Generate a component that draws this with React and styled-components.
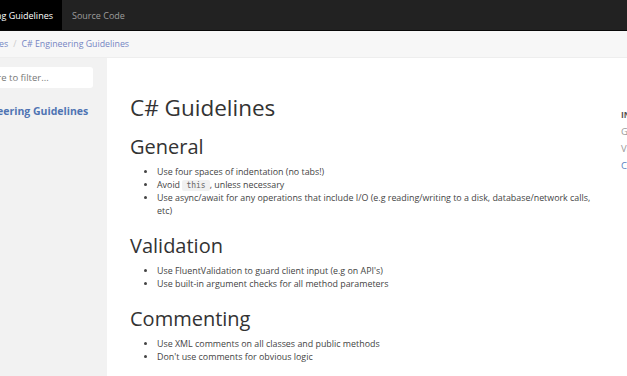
import React from "react";
import styled, { createGlobalStyle } from "styled-components";

const Global = createGlobalStyle`
  html, body { margin: 0; padding: 0; background: #fff; overflow: hidden; }
  body { font-family: "Open Sans", "Noto Sans", sans-serif; color: #333; }
  * { box-sizing: border-box; }
`;

const Page = styled.div`
  width: 627px;
  height: 376px;
  display: flex;
  flex-direction: column;
  overflow: hidden;
`;

const Navbar = styled.nav`
  height: 31px;
  flex: none;
  display: flex;
  align-items: stretch;
  background: #222;
  border-bottom: 1px solid #080808;
  font-size: 9px;
`;

const NavItem = styled.a`
  display: flex;
  align-items: center;
  justify-content: ${(p) => (p.$active ? "flex-end" : "flex-start")};
  white-space: nowrap;
  overflow: hidden;
  padding: 0 10px;
  color: ${(p) => (p.$active ? "#fff" : "#9d9d9d")};
  background: ${(p) => (p.$active ? "#000" : "transparent")};
  width: ${(p) => (p.$active ? "62px" : "auto")};
  padding-right: ${(p) => (p.$active ? "9px" : "10px")};
  text-decoration: none;
`;

const Subnav = styled.div`
  height: 27px;
  flex: none;
  display: flex;
  align-items: center;
  background: #f7f7f7;
  border-bottom: 1px solid #eee;
  font-size: 8.8px;
  white-space: nowrap;
  overflow: hidden;
`;

const Crumbs = styled.ol`
  list-style: none;
  margin: 0 0 0 -86px;
  padding: 0;
  display: flex;
  gap: 5px;
`;

const Crumb = styled.li`
  color: #7585c3;
  display: flex;
  gap: 5px;
  &:not(:first-child)::before {
    content: "/";
    color: #ccc;
  }
`;

const Body = styled.div`
  flex: 1;
  display: flex;
  min-height: 0;
`;

const Sidebar = styled.aside`
  width: 107px;
  flex: none;
  background: #f2f2f2;
  overflow: hidden;
`;

const SidebarInner = styled.div`
  width: 200px;
  margin-left: -93px;
  padding: 9px 14px 0 12px;
  display: flex;
  flex-direction: column;
  gap: 16px;
`;

const Filter = styled.div`
  height: 21px;
  background: #fff;
  border-radius: 3px;
  display: flex;
  align-items: center;
  padding-left: 41px;
  font-size: 9.5px;
  color: #777;
  white-space: nowrap;
`;

const TocLink = styled.a`
  font-size: 10.5px;
  font-weight: 700;
  color: #4f74b3;
  white-space: nowrap;
  text-decoration: none;
  padding-left: 33px;
`;

const Main = styled.main`
  flex: 1;
  display: flex;
  background: #fff;
  min-width: 0;
`;

const Article = styled.article`
  width: 492px;
  flex: none;
  padding: 35px 0 0 23px;
  color: #333;
`;

const H1 = styled.h1`
  font-size: 22.5px;
  font-weight: 400;
  margin: 0 0 11px;
  line-height: 30px;
`;

const H2 = styled.h2`
  font-size: 20px;
  font-weight: 400;
  margin: 0 0 6px;
  line-height: 26px;
`;

const List = styled.ul`
  margin: 0 0 16px;
  padding-left: 27px;
  font-size: 8.9px;
  line-height: 12.5px;
  color: #444;
  & li::marker { font-size: 8px; }
`;

const Code = styled.code`
  font-family: "DejaVu Sans Mono", "Liberation Mono", monospace;
  font-size: 8px;
  background: #f1f1f1;
  color: #666;
  padding: 1px 4px;
  border-radius: 2px;
`;

const Affix = styled.div`
  padding: 50px 0 0 22px;
  display: flex;
  flex-direction: column;
  gap: 4px;
  font-size: 9.5px;
  line-height: 13px;
  white-space: nowrap;
`;

const AffixTitle = styled.div`
  font-weight: 700;
  color: #555;
  font-size: 8.5px;
`;

const AffixLink = styled.a`
  color: ${(p) => (p.$active ? "#5b7fc0" : "#999")};
  text-decoration: none;
`;

export default function App() {
  return (
    <>
      <Global />
      <Page>
        <Navbar>
          <NavItem $active>Engineering Guidelines</NavItem>
          <NavItem>Source Code</NavItem>
        </Navbar>
        <Subnav>
          <Crumbs>
            <Crumb>Engineering Guidelines</Crumb>
            <Crumb>C# Engineering Guidelines</Crumb>
          </Crumbs>
        </Subnav>
        <Body>
          <Sidebar>
            <SidebarInner>
              <Filter>Enter here to filter...</Filter>
              <TocLink>C# Engineering Guidelines</TocLink>
            </SidebarInner>
          </Sidebar>
          <Main>
            <Article>
              <H1>C# Guidelines</H1>
              <H2>General</H2>
              <List>
                <li>Use four spaces of indentation (no tabs!)</li>
                <li>
                  Avoid <Code>this</Code>, unless necessary
                </li>
                <li>
                  Use async/await for any operations that include I/O (e.g reading/writing to a disk, database/network calls, etc)
                </li>
              </List>
              <H2>Validation</H2>
              <List>
                <li>Use FluentValidation to guard client input (e.g on API's)</li>
                <li>Use built-in argument checks for all method parameters</li>
              </List>
              <H2>Commenting</H2>
              <List>
                <li>Use XML comments on all classes and public methods</li>
                <li>Don't use comments for obvious logic</li>
              </List>
            </Article>
            <Affix>
              <AffixTitle>IN THIS ARTICLE</AffixTitle>
              <AffixLink>General</AffixLink>
              <AffixLink>Validation</AffixLink>
              <AffixLink $active>Commenting</AffixLink>
            </Affix>
          </Main>
        </Body>
      </Page>
    </>
  );
}
